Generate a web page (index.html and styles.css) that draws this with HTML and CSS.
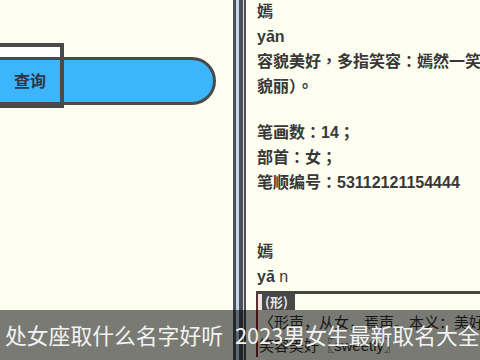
FILE: index.html
```html
<!DOCTYPE html>
<html lang="zh">
<head>
<meta charset="utf-8">
<title>取名</title>
<link rel="stylesheet" href="styles.css">
</head>
<body>
<div class="carousel">
  <div class="slide slide-a">
    <div class="search">
      <div class="pill"><span class="query-label">查询</span></div>
      <div class="query-box"></div>
    </div>
    <div class="caption caption-a">处女座取什么名字好听</div>
  </div>
  <div class="slide slide-b">
    <div class="divider"></div>
    <div class="entry">
      <div class="block first" lang="zh-TW">
        <div class="line">嫣</div>
        <div class="line">yān</div>
        <div class="line">容貌美好，多指笑容：嫣然一笑</div>
        <div class="line">貌丽）。</div>
      </div>
      <div class="block" lang="zh-TW">
        <div class="line">笔画数：14；</div>
        <div class="line">部首：女；</div>
        <div class="line">笔顺编号：53112121154444</div>
      </div>
      <div class="block later">
        <div class="line">嫣</div>
        <div class="line">yā <span class="light">n</span></div>
      </div>
      <div class="def">
        <div class="def-head"><span class="def-tag">(形)</span></div>
        <div class="def-body">
          <div class="def-line">〈形声，从女，焉声。本义：美好的样</div>
          <div class="def-line">笑容美好〖sweetly〗</div>
        </div>
      </div>
    </div>
    <div class="caption caption-b">2023男女生最新取名大全</div>
  </div>
</div>
</body>
</html>
```
FILE: styles.css
```css
html, body {
  margin: 0;
  padding: 0;
}
body {
  background: #fdfef0;
  width: 480px;
  height: 360px;
  overflow: hidden;
  font-family: "Liberation Sans", "Noto Sans CJK SC", sans-serif;
}
.carousel {
  display: flex;
  height: 360px;
  overflow: hidden;
}
.slide {
  position: relative;
  height: 360px;
  overflow: hidden;
}
.slide-a {
  width: 233px;
  flex: none;
}
.slide-b {
  flex: 1;
  display: flex;
}
.search {
  position: relative;
  margin-top: 57px;
  margin-left: -30px;
  width: 246px;
  height: 48px;
}
.pill {
  box-sizing: border-box;
  height: 48px;
  border: 3px solid #4a4a4a;
  border-radius: 24px;
  background: #3cb5fd;
  display: flex;
  align-items: center;
  padding-left: 41px;
}
.query-label {
  font-family: "Noto Sans CJK SC", sans-serif;
  font-weight: 700;
  font-size: 16px;
  color: #2c3646;
  line-height: 1;
  margin-top: -2px;
}
.query-box {
  position: absolute;
  left: 0;
  top: -14px;
  width: 94px;
  height: 65px;
  box-sizing: border-box;
  border: 4px solid #4a4a4a;
  border-bottom-width: 5px;
  background: linear-gradient(#ffffff 0 10px, transparent 10px);
}
.caption {
  position: absolute;
  left: 0;
  right: 0;
  top: 310px;
  height: 50px;
  background: rgba(0, 0, 0, 0.52);
  color: #f3f3f3;
  font-family: "Noto Sans CJK SC", sans-serif;
  font-size: 21.8px;
  line-height: 50px;
  white-space: nowrap;
  z-index: 2;
}
.caption-a {
  padding-left: 5px;
}
.caption-b {
  padding-left: 2px;
}
.divider {
  width: 13px;
  flex: none;
  height: 360px;
  background: linear-gradient(to right,
    #4a5058 0 2.5px,
    #c6d5ee 2.5px 6px,
    #4a5058 6px 9.5px,
    #d9ddd6 9.5px 11px,
    #4a5058 11px 13px);
}
.entry {
  flex: 1;
  min-width: 0;
  padding-left: 10px;
  overflow: hidden;
  white-space: nowrap;
  color: #383838;
  font-family: "Liberation Sans", "Noto Sans CJK TC", sans-serif;
  font-weight: 700;
  font-size: 16px;
  line-height: 25px;
}
.line {
  padding-left: 1px;
}
.block.first {
  margin-top: -1px;
}
.block + .block {
  margin-top: 21px;
}
.block.later {
  margin-top: 44px;
}
.light {
  font-weight: 400;
}
.def {
  margin-top: 2px;
  border-top: 3px solid #464646;
}
.def-head {
  display: flex;
  height: 16px;
}
.def-tag {
  display: block;
  width: 34px;
  padding-left: 5px;
  background: linear-gradient(to right, #5a3030 0 2px, #f0e4e4 2px 6px, #484848 6px);
  color: #e6e6e6;
  font-family: "Noto Sans CJK SC", sans-serif;
  font-size: 13px;
  line-height: 16px;
  text-indent: 4px;
}
.def-body {
  border-left: 2px solid #8a2424;
  padding-left: 1px;
  font-family: "Liberation Sans", "Noto Sans CJK SC", sans-serif;
  font-weight: 400;
  font-size: 15px;
  line-height: 23px;
  color: #333333;
  padding-top: 1px;
}
```
